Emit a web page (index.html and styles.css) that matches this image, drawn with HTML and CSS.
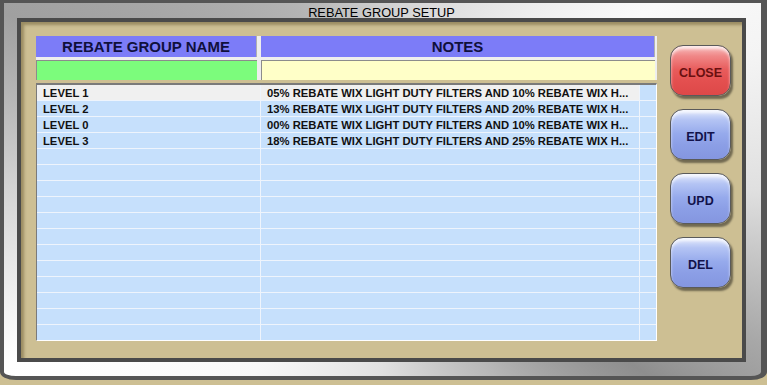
FILE: index.html
```html
<!DOCTYPE html>
<html lang="en">
<head>
  <meta charset="UTF-8">
  <title>Rebate Group Setup</title>
  <link rel="stylesheet" href="styles.css">
</head>
<body>

<div class="window">
  <div class="title">REBATE GROUP SETUP</div>

  <div class="panel">
    <div class="grid">
      <div class="grid-head">
        <div class="hcell">REBATE GROUP NAME</div>
        <div class="hcell">NOTES</div>
        <div class="fcell green"></div>
        <div class="fcell yellow"></div>
      </div>

      <div class="grid-body">
        <div class="row selected"><div class="cell">LEVEL 1</div><div class="cell">05% REBATE WIX LIGHT DUTY FILTERS AND 10% REBATE WIX H...</div><div class="cell scroll"></div></div>
        <div class="row"><div class="cell">LEVEL 2</div><div class="cell">13% REBATE WIX LIGHT DUTY FILTERS AND 20% REBATE WIX H...</div><div class="cell scroll"></div></div>
        <div class="row"><div class="cell">LEVEL 0</div><div class="cell">00% REBATE WIX LIGHT DUTY FILTERS AND 10% REBATE WIX H...</div><div class="cell scroll"></div></div>
        <div class="row"><div class="cell">LEVEL 3</div><div class="cell">18% REBATE WIX LIGHT DUTY FILTERS AND 25% REBATE WIX H...</div><div class="cell scroll"></div></div>
        <div class="row"><div class="cell"></div><div class="cell"></div><div class="cell scroll"></div></div>
        <div class="row"><div class="cell"></div><div class="cell"></div><div class="cell scroll"></div></div>
        <div class="row"><div class="cell"></div><div class="cell"></div><div class="cell scroll"></div></div>
        <div class="row"><div class="cell"></div><div class="cell"></div><div class="cell scroll"></div></div>
        <div class="row"><div class="cell"></div><div class="cell"></div><div class="cell scroll"></div></div>
        <div class="row"><div class="cell"></div><div class="cell"></div><div class="cell scroll"></div></div>
        <div class="row"><div class="cell"></div><div class="cell"></div><div class="cell scroll"></div></div>
        <div class="row"><div class="cell"></div><div class="cell"></div><div class="cell scroll"></div></div>
        <div class="row"><div class="cell"></div><div class="cell"></div><div class="cell scroll"></div></div>
        <div class="row"><div class="cell"></div><div class="cell"></div><div class="cell scroll"></div></div>
        <div class="row"><div class="cell"></div><div class="cell"></div><div class="cell scroll"></div></div>
        <div class="row last"><div class="cell"></div><div class="cell"></div><div class="cell scroll"></div></div>
      </div>
    </div>

    <div class="buttons">
      <button class="btn btn-red">CLOSE</button>
      <button class="btn btn-blue">EDIT</button>
      <button class="btn btn-blue">UPD</button>
      <button class="btn btn-blue">DEL</button>
    </div>
  </div>
</div>

</body>
</html>
```

FILE: styles.css
```css
body {
  margin: 0;
  background: #cdbf93;
  font-family: 'Liberation Sans', Arial, sans-serif;
}
.window {
  width: 767px;
  height: 380px;
  box-sizing: border-box;
  border: 4px solid #555555;
  border-top-width: 3px;
  border-right-width: 6px;
  border-radius: 0 0 16px 16px / 0 0 8px 8px;
  padding: 0 15px 14px 13px;
  background: conic-gradient(from 0deg at 50% 50%,
    #d0d0d0 0deg, #e8e8e8 33deg, #fafafa 56deg, #f4f4f4 70deg,
    #e0e0e0 90deg, #a8a8a8 112deg, #8e8e8e 125deg, #b8b8b8 150deg,
    #e0e0e0 180deg, #f8f8f8 215deg, #ffffff 245deg, #d4d4d4 270deg,
    #a0a0a0 295deg, #b4b4b4 335deg, #d0d0d0 360deg);
}
.title {
  height: 15px;
  line-height: 19px;
  font-size: 12.8px;
  color: #000;
  text-align: center;
}
.panel {
  width: 729px;
  height: 344px;
  box-sizing: border-box;
  border: 4px solid #4a4a4a;
  background: #cdbf93;
  box-shadow: inset 3px 3px 3px rgba(60,45,10,0.35);
  display: flex;
  gap: 13px;
  padding: 14px 0 0 15px;
}
.grid {
  width: 621px;
  display: flex;
  flex-direction: column;
  gap: 3px;
}
.grid-head {
  display: grid;
  grid-template-columns: 221px 394px;
  grid-template-rows: 21px 20px;
  column-gap: 4px;
  row-gap: 3px;
  padding-right: 2px;
  background: #eeeeee;
}
.hcell {
  background: #7c7cf8;
  color: #10103c;
  font-weight: bold;
  font-size: 15px;
  line-height: 21px;
  text-align: center;
  border-right: 1px solid #b0b0b0;
}
.fcell {
  border-top: 1px solid #8c8c8c;
  border-left: 1px solid #8c8c8c;
}
.green {
  background: #7cfc7c;
}
.yellow {
  background: #ffffc8;
}
.grid-body {
  border-top: 2px solid #7a7a7a;
  border-left: 1px solid #7a7a7a;
  border-bottom: 1px solid #ffffff;
  border-right: 1px solid #ffffff;
  background: #c6e0fc;
}
.row {
  display: grid;
  grid-template-columns: 224px 379px 16px;
  border-bottom: 1px solid #eef4fc;
  height: 16px;
  box-sizing: border-box;
}
.row.last {
  border-bottom: none;
  height: 15px;
}
.cell {
  border-right: 1px solid #eef4fc;
  padding: 2px 0 0 6px;
  font-size: 11.25px;
  line-height: 13px;
  font-weight: bold;
  color: #111;
  white-space: nowrap;
  overflow: hidden;
}
.cell.scroll {
  border-right: none;
  padding: 0;
}
.row.selected .cell {
  background: #f0f0f0;
}
.row.selected .cell.scroll {
  background: #c6e0fc;
}
.buttons {
  margin-top: 9px;
  display: flex;
  flex-direction: column;
  gap: 13px;
}
.btn {
  width: 61px;
  height: 51px;
  border: 1px solid #5a5a5a;
  border-radius: 13px;
  font-family: 'Liberation Sans', Arial, sans-serif;
  font-weight: bold;
  font-size: 12.5px;
  padding: 4px 0 0 0;
  box-shadow: 2px 3px 2px rgba(0,0,0,0.45), inset 0 3px 3px rgba(255,255,255,0.7);
  cursor: pointer;
}
.btn-red {
  color: #6a1010;
  background: linear-gradient(#f8c0c0 0%, #f08888 20%, #e85c5c 48%, #e45050 70%, #dd4848 100%);
}
.btn-blue {
  color: #12124a;
  background: linear-gradient(#e4eafc 0%, #b4c4f4 20%, #96aaec 48%, #8c9fe6 70%, #8496e0 100%);
}
```
